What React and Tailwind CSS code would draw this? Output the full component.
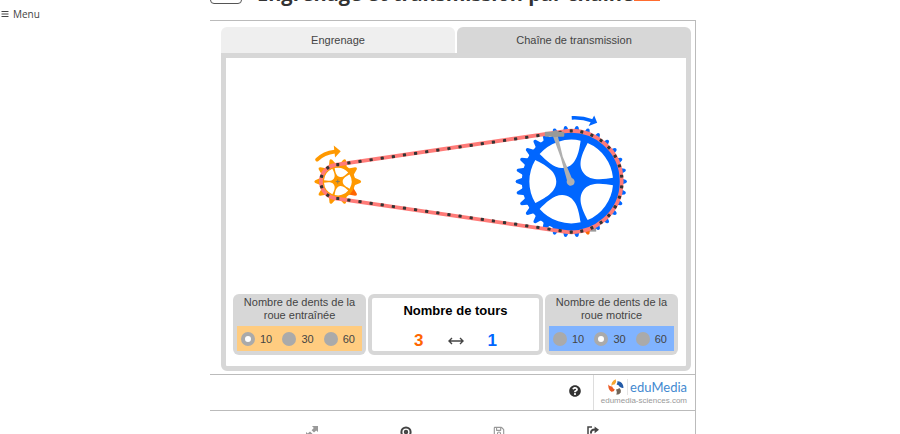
import { useState } from 'react';
import { FaBars, FaQuestionCircle, FaRegSave } from 'react-icons/fa';

const TABS = ['Engrenage', 'Chaîne de transmission'];
const TEETH = [10, 30, 60];

const range = (n) => Array.from({ length: n }, (_, i) => i);

// chain geometry
const SMALL = { x: 338, y: 181.8, r: 17 };
const BIG = { x: 572, y: 181.8, r: 50.8 };

function chainLinks() {
  const links = [];
  range(6).forEach((i) => links.push([SMALL, 90 + 36 * i]));
  range(16).forEach((i) => links.push([BIG, -90 + 12 * i]));
  const dots = links.map(([g, a]) => {
    const rad = (a * Math.PI) / 180;
    return { x: g.x + g.r * Math.cos(rad), y: g.y + g.r * Math.sin(rad), a };
  });
  range(20).forEach((i) => {
    const t = (i + 1) / 21;
    const x = SMALL.x + (BIG.x - SMALL.x) * t;
    const dy = SMALL.r + (BIG.r - SMALL.r) * t;
    dots.push({ x, y: SMALL.y - dy, a: -8 });
    dots.push({ x, y: SMALL.y + dy, a: 8 });
  });
  return dots;
}

function Hole({ angle, scale }) {
  return (
    <path
      transform={`rotate(${angle}) scale(${scale})`}
      fill="#fff"
      d="M36 -21.6A42 42 0 0 1 36 21.6C27 17 15 11 15 0C15 -11 27 -17 36 -21.6Z"
    />
  );
}

function Transmission() {
  return (
    <svg viewBox="226 58 461 236" className="block w-full" role="img" aria-label="Chaîne de transmission">
      {/* Driven wheel */}
      <g transform={`translate(${SMALL.x} ${SMALL.y})`}>
        {range(10).map((i) => (
          <path
            key={i}
            transform={`rotate(${i * 36})`}
            fill={i === 1 ? '#ff6600' : '#ff9900'}
            d="M14 -5.5L17.5 -3.6L22.5 -1.4Q24.4 0 22.5 1.4L17.5 3.6L14 5.5Z"
          />
        ))}
        <circle r="17.5" fill="#ff9900" />
        {range(5).map((i) => <Hole key={i} angle={i * 72} scale={0.33} />)}
        <path d="M-2 0H2M0 -2V2" stroke="#8a7a5c" strokeWidth="1" />
      </g>

      {/* Driving wheel */}
      <path d="M588 228L597 228L597 232L588 232Z" fill="#999" />
      <g transform={`translate(${BIG.x} ${BIG.y})`}>
        {range(30).map((i) => (
          <path
            key={i}
            transform={`rotate(${i * 12})`}
            fill={i === 6 ? '#ff6600' : '#0066ff'}
            d="M47 -5L50 -3.2L55 -1.5Q56.8 0 55 1.5L50 3.2L47 5Z"
          />
        ))}
        <circle r="49.5" fill="#0066ff" />
        {range(5).map((i) => <Hole key={i} angle={36 + i * 72} scale={1} />)}
      </g>

      {/* Chain */}
      <path
        d="M335.5 165L564.6 131.5A50.8 50.8 0 1 1 564.6 232.1L335.5 198.6A17 17 0 0 1 335.5 165Z"
        fill="none"
        stroke="#ff7b78"
        strokeWidth="3.8"
      />
      {chainLinks().map((d, i) => (
        <rect
          key={i}
          x={d.x - 1.6}
          y={d.y - 1.5}
          width="3.2"
          height="3"
          rx="0.6"
          fill="#333"
          transform={`rotate(${d.a} ${d.x} ${d.y})`}
        />
      ))}

      {/* Crank and pedal */}
      <path d="M553.5 136L558.5 136L563.5 157L572.5 178.2A4 4 0 1 1 567.7 180.5L561.5 158Z" fill="#b0b0b0" />
      <rect x="545.5" y="132" width="19.5" height="4.8" rx="0.8" fill="#999" />
      <circle cx="556" cy="134" r="3.4" fill="#999" />

      {/* Rotation arrows */}
      <path d="M317.3 159.8Q324 153.2 335 151.8" fill="none" stroke="#ff9900" strokeWidth="3.8" strokeLinecap="round" />
      <path d="M334 145.6L341 151.4L335.3 157.6Z" fill="#ff9900" />
      <path d="M572.5 118Q583 117.4 593 121" fill="none" stroke="#0066ff" strokeWidth="3.6" />
      <path d="M595 115.6L598 122.8L589.4 126.2Z" fill="#0066ff" />
    </svg>
  );
}

function TeethPicker({ name, lines, value, onChange, color }) {
  return (
    <div role="radiogroup" aria-labelledby={name} className="w-[133px] shrink-0 rounded-md bg-[#d7d7d7] p-1 pt-[2px]">
      <p id={name} className="mb-1 text-center text-[11px] leading-[13px] text-[#444]">
        {lines[0]}
        <br />
        {lines[1]}
      </p>
      <div className={`flex h-[25px] items-center justify-between pl-1 pr-[7px] ${color}`}>
        {TEETH.map((n) => (
          <label key={n} className="flex items-center gap-[5px] text-[11px] leading-4 text-[#444]">
            <input
              type="radio"
              name={name}
              checked={value === n}
              onChange={() => onChange(n)}
              className="h-[14px] w-[14px] appearance-none rounded-full bg-[#aaa] checked:border-4 checked:border-[#aaa] checked:bg-white"
            />
            {n}
          </label>
        ))}
      </div>
    </div>
  );
}

function Logo() {
  return (
    <a href="#edumedia" className="flex w-[102px] flex-col items-end border-l border-[#ddd] pt-1 pr-2">
      <span className="flex items-center gap-[3px]">
        <svg viewBox="0 0 16 16" className="h-4 w-4">
          <path d="M7.8 0.2Q9 3 6.6 5.6Q4.6 5.4 3.6 7Q2.6 2.6 7.8 0.2Z" fill="#f7a531" />
          <path d="M0.3 5.6Q1.6 7.8 4.2 7.6Q4.6 9.8 6.8 10.4Q6 13 3.4 12.8Q0 10.8 0.3 5.6Z" fill="#ec5a24" />
          <path d="M9.4 2.2Q14.8 1.8 15.6 8.8Q13.4 9.4 11.6 7.8Q11 5.6 8.6 5.4Q9.8 3.8 9.4 2.2Z" fill="#245ba7" />
          <path d="M8 10.4Q10 10.4 11.4 9Q13.6 10.8 12.8 13.4Q11.4 15.6 8.4 15.8Q9.6 13.2 8 10.4Z" fill="#71665a" />
        </svg>
        <span className="border-l border-[#e5e5e5] pl-[2px] font-['Lato',sans-serif] text-[13px] leading-4 text-[#4389d0]">
          eduMedia
        </span>
      </span>
      <span className="mt-[2px] text-[8px] leading-[8px] text-[#999]">edumedia-sciences.com</span>
    </a>
  );
}

export default function App() {
  const [tab, setTab] = useState(1);
  const [driven, setDriven] = useState(10);
  const [driving, setDriving] = useState(30);

  return (
    <div className="flex h-screen overflow-hidden bg-white font-['Liberation_Sans',Arial,sans-serif] text-[#444]">
      <aside className="w-[210px] shrink-0 pt-[7px] pl-px">
        <button className="flex items-center gap-1 font-['Open_Sans',sans-serif] text-[10px] leading-[14px]">
          <FaBars className="h-2 w-2" />
          Menu
        </button>
      </aside>

      <div className="mr-[204px] min-w-0 flex-1">
        <header className="mb-4 flex h-1 items-end gap-[15px] whitespace-nowrap">
          <span className="h-6 w-8 shrink-0 rounded-sm border border-[#555]"></span>
          <div className="flex items-end">
            <h1 className="font-['Open_Sans',sans-serif] text-[20px] leading-5 font-bold text-[#333]">
              Engrenage et transmission par chaîne
            </h1>
            <span className="mb-[3px] h-4 w-[26px] bg-[#ff6c2f]"></span>
          </div>
        </header>

        <main className="border-t border-r border-[#bbb]">
          <section className="pt-[6px] pr-1 pb-[3px] pl-[11px]">
            <div className="grid grid-cols-2 gap-[2px]" role="tablist">
              {TABS.map((label, i) => (
                <button
                  key={label}
                  role="tab"
                  aria-selected={tab === i}
                  onClick={() => setTab(i)}
                  className={`h-[26px] rounded-t-md text-[11px] ${tab === i ? 'bg-[#d7d7d7]' : 'bg-[#efefef]'}`}
                >
                  {label}
                </button>
              ))}
            </div>

            <div className="rounded-b-md border-[5px] border-[#d7d7d7] pb-[11px]">
              <Transmission />
              <div className="mt-px flex gap-[2px] pr-2 pl-[7px]">
                <TeethPicker
                  name="driven"
                  lines={['Nombre de dents de la', 'roue entraînée']}
                  value={driven}
                  onChange={setDriven}
                  color="bg-[#ffcc80]"
                />
                <div className="min-w-0 flex-1 rounded-md border-4 border-[#d7d7d7] pt-[5px] text-center">
                  <h2 className="text-[13px] leading-4 font-bold text-black">Nombre de tours</h2>
                  <div className="mt-3 flex items-center justify-center gap-6 text-[17px] leading-5 font-bold">
                    <output className="text-[#ff6600]">{driving / driven}</output>
                    <svg viewBox="0 0 16 8" className="h-2 w-4" fill="none" stroke="#444" strokeWidth="1.4">
                      <path d="M1 4H15M4 1L1 4L4 7M12 1L15 4L12 7" />
                    </svg>
                    <output className="text-[#0066ff]">1</output>
                  </div>
                </div>
                <TeethPicker
                  name="driving"
                  lines={['Nombre de dents de la', 'roue motrice']}
                  value={driving}
                  onChange={setDriving}
                  color="bg-[#80b3ff]"
                />
              </div>
            </div>
          </section>

          <div className="flex h-[37px] justify-end border-y border-[#bbb]">
            <button aria-label="Aide" className="mr-3 pb-1 text-[#333]">
              <FaQuestionCircle className="h-3 w-3" />
            </button>
            <Logo />
          </div>

          <div className="grid grid-cols-4 justify-items-center px-[55px] py-[15px] text-[#444]">
            <button aria-label="Plein écran" className="text-[#999]">
              <svg viewBox="0 0 12 12" className="h-3 w-3" fill="currentColor">
                <path d="M6 0H12V6L10.2 4.4L8 6.6L5.6 4.2L7.8 2ZM0 6L1.8 7.6L4 5.4L6.4 7.8L4.2 10L6 12H0Z" />
              </svg>
            </button>
            <button aria-label="Capture">
              <svg viewBox="0 0 12 12" className="h-3 w-3" fill="none" stroke="currentColor" strokeWidth="2">
                <circle cx="6" cy="6" r="4.6" />
                <circle cx="6" cy="6" r="1.2" />
              </svg>
            </button>
            <button aria-label="Enregistrer" className="text-[#999]"><FaRegSave className="h-3 w-3" /></button>
            <button aria-label="Partager">
              <svg viewBox="0 0 12 12" className="h-3 w-3" fill="none" stroke="currentColor" strokeWidth="1.5">
                <path d="M5 1H1V11H10V8" />
                <path d="M4 7.5Q3.6 3.6 8 3.6" strokeWidth="2" />
                <path d="M7.6 0.4L12 3.8L7.6 7.2Z" fill="currentColor" stroke="none" />
              </svg>
            </button>
          </div>
        </main>
      </div>
    </div>
  );
}
